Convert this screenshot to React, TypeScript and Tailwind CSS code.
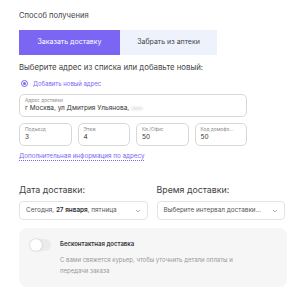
const smallFields = [
  { label: "Подъезд", value: "3" },
  { label: "Этаж", value: "4" },
  { label: "Кв./Офис", value: "50" },
  { label: "Код домофо...", value: "50" },
];

function Chevron() {
  return (
    <svg width="6" height="4" viewBox="0 0 6 4" className="text-gray-400">
      <path d="M1 1l2 2 2-2" fill="none" stroke="currentColor" strokeWidth="0.8" />
    </svg>
  );
}

export default function App() {
  return (
    <div className="w-[300px] h-[300px] bg-white overflow-hidden text-[#333] font-['Inter',sans-serif] pl-[19px] pt-[11px]">
      <p className="text-[7.6px] leading-[10px] text-[#444]">Способ получения</p>

      <div className="flex mt-[9px]">
        <div className="w-[101px] h-[25px] bg-[#7a66f2] text-white text-[7px] flex items-center justify-center">
          Заказать доставку
        </div>
        <div className="w-[97px] h-[25px] bg-[#eef2fd] text-[#444] text-[7px] flex items-center justify-center">
          Забрать из аптеки
        </div>
      </div>

      <p className="mt-[7px] text-[7.8px] leading-[10px] text-[#444]">
        Выберите адрес из списка или добавьте новый:
      </p>

      <div className="flex items-center gap-[5px] mt-[7px] ml-[2px]">
        <div className="w-[7px] h-[7px] rounded-full border border-[#7a66f2] flex items-center justify-center">
          <div className="w-[3px] h-[3px] rounded-full bg-[#7a66f2]" />
        </div>
        <span className="text-[6px] text-[#7a66f2]">Добавить новый адрес</span>
      </div>

      <div className="mt-[6px] w-[228px] h-[23px] border border-[#d8d8d8] rounded-[5px] px-[5px] pt-[2px]">
        <p className="text-[4.8px] leading-[6px] text-[#888]">Адрес доставки</p>
        <p className="text-[6.5px] leading-[10px] text-[#333] flex items-center">
          г Москва, ул Дмитрия Ульянова,
          <span className="ml-[2px] inline-block w-[12px] h-[3px] bg-[#e4e4e4] rounded-full blur-[1px]" />
        </p>
      </div>

      <div className="mt-[6px] flex gap-[6px] w-[228px]">
        {smallFields.map((f, i) => (
          <div
            key={i}
            className="flex-1 h-[23px] border border-[#d8d8d8] rounded-[5px] px-[5px] pt-[2px]"
          >
            <p className="text-[4.8px] leading-[6px] text-[#888] whitespace-nowrap">{f.label}</p>
            <p className="text-[6.5px] leading-[10px] text-[#333]">{f.value}</p>
          </div>
        ))}
      </div>

      <p className="mt-[6px] text-[6.3px] text-[#7a66f2] underline decoration-dotted underline-offset-2">
        Дополнительная информация по адресу
      </p>

      <div className="mt-[23px] flex gap-[9px] w-[266px]">
        <div className="flex-1">
          <p className="text-[8.8px] leading-[11px] text-[#444]">Дата доставки:</p>
          <div className="mt-[6px] h-[19px] border border-[#e4e4e4] rounded-[4px] px-[6px] flex items-center justify-between">
            <span className="text-[6.4px] text-[#555]">
              Сегодня, <b className="font-semibold text-[#333]">27 января</b>, пятница
            </span>
            <Chevron />
          </div>
        </div>
        <div className="flex-1">
          <p className="text-[8.8px] leading-[11px] text-[#444]">Время доставки:</p>
          <div className="mt-[6px] h-[19px] border border-[#e4e4e4] rounded-[4px] px-[6px] flex items-center justify-between">
            <span className="text-[6.4px] text-[#555]">Выберите интервал доставки...</span>
            <Chevron />
          </div>
        </div>
      </div>

      <div className="mt-[8px] w-[268px] h-[59px] bg-[#f6f6f6] rounded-[8px] flex pl-[11px] pt-[11px] gap-[9px]">
        <div className="w-[21px] h-[12px] rounded-full bg-[#ebebeb] relative shrink-0">
          <div className="absolute left-0 top-0 w-[12px] h-[12px] rounded-full bg-white shadow-[0_0_2px_rgba(0,0,0,0.25)]" />
        </div>
        <div className="pt-[1px]">
          <p className="text-[6px] font-semibold text-[#333] leading-[8px]">Бесконтактная доставка</p>
          <p className="mt-[6px] text-[6px] leading-[11px] text-[#999] w-[180px]">
            С вами свяжется курьер, чтобы уточнить детали оплаты и передачи заказа
          </p>
        </div>
      </div>
    </div>
  );
}
